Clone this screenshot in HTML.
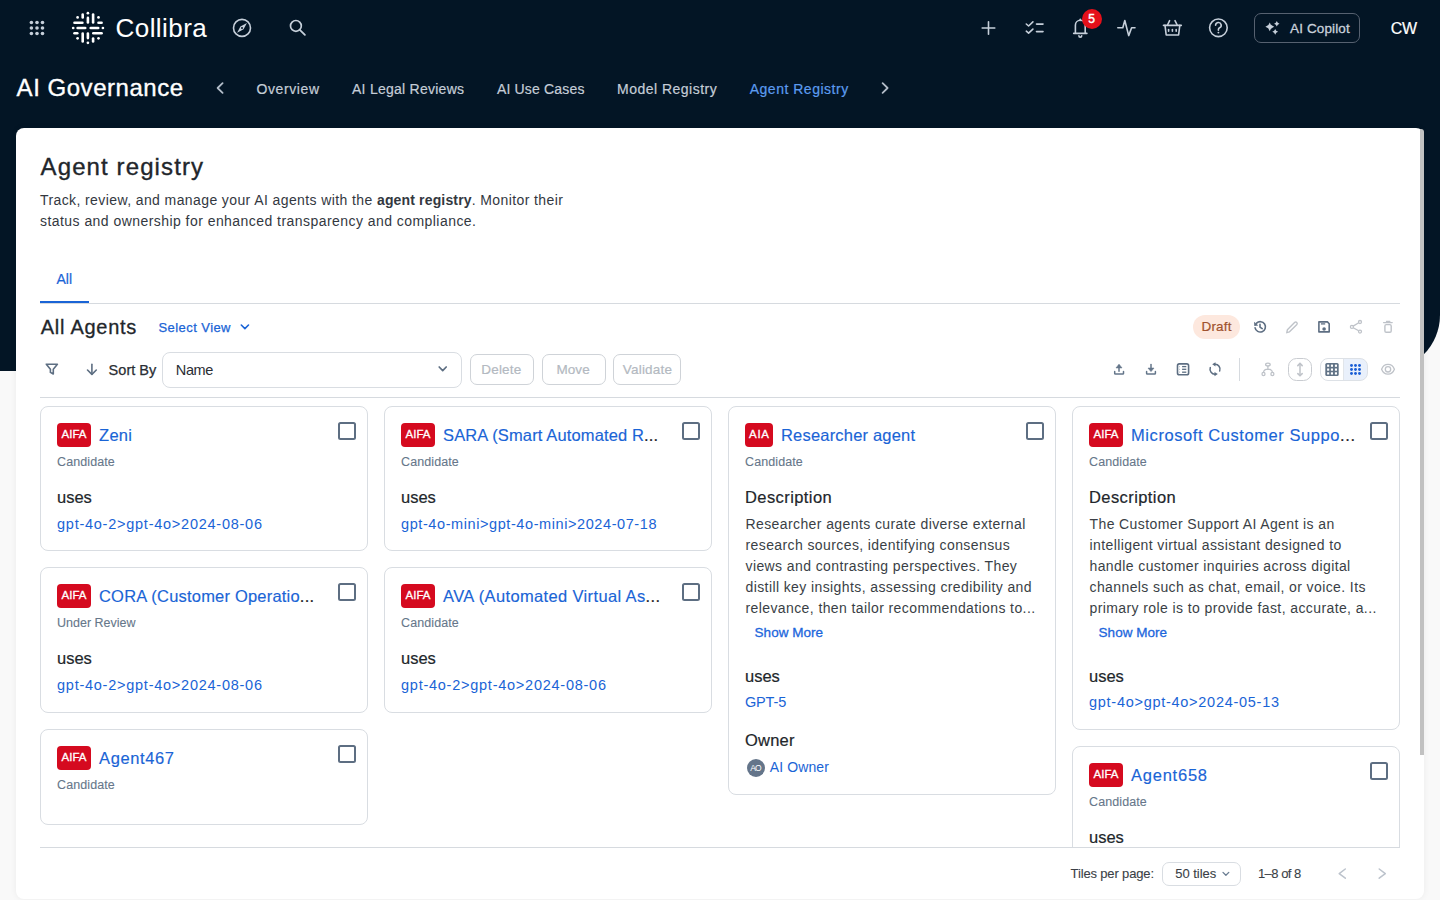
<!DOCTYPE html>
<html><head><meta charset="utf-8"><style>
html,body{margin:0;padding:0;}
body{width:1440px;height:900px;overflow:hidden;position:relative;background:#f9f9f9;font-family:"Liberation Sans",sans-serif;}
.t{position:absolute;white-space:nowrap;}
.b{position:absolute;display:block;}
</style></head><body>
<div class="b" style="left:0px;top:0px;width:1440px;height:371px;background:#031525;border-bottom-right-radius:56px;"></div>
<svg class="b" style="left:20px;top:10px" width="40" height="36" viewBox="20 10 40 36"><circle cx="31.4" cy="22.5" r="1.8" fill="#c6cfda"/><circle cx="31.4" cy="28" r="1.8" fill="#c6cfda"/><circle cx="31.4" cy="33.5" r="1.8" fill="#c6cfda"/><circle cx="37" cy="22.5" r="1.8" fill="#c6cfda"/><circle cx="37" cy="28" r="1.8" fill="#c6cfda"/><circle cx="37" cy="33.5" r="1.8" fill="#c6cfda"/><circle cx="42.5" cy="22.5" r="1.8" fill="#c6cfda"/><circle cx="42.5" cy="28" r="1.8" fill="#c6cfda"/><circle cx="42.5" cy="33.5" r="1.8" fill="#c6cfda"/></svg>
<svg class="b" style="left:68px;top:8px" width="40" height="40" viewBox="68 8 40 40"><g stroke="#ffffff" stroke-width="2.6" stroke-linecap="round" fill="none"><line x1="82.7" y1="14.5" x2="82.7" y2="17.4"/><line x1="87.9" y1="17.900000000000002" x2="87.9" y2="22.5"/><line x1="93.1" y1="14.5" x2="93.1" y2="22.5"/><line x1="74.5" y1="22.7" x2="82.4" y2="22.7"/><line x1="98.5" y1="22.7" x2="101.60000000000001" y2="22.7"/><line x1="77.6" y1="28" x2="85.2" y2="28"/><line x1="90.7" y1="28" x2="98.2" y2="28"/><line x1="74.5" y1="33.3" x2="77.3" y2="33.3"/><line x1="93.3" y1="33.3" x2="101.60000000000001" y2="33.3"/><line x1="82.7" y1="33.5" x2="82.7" y2="41.5"/><line x1="87.9" y1="33.5" x2="87.9" y2="38.1"/><line x1="93.1" y1="38.599999999999994" x2="93.1" y2="41.5"/></g><circle cx="87.9" cy="13.2" r="1.35" fill="#ffffff"/><circle cx="77.6" cy="17.4" r="1.35" fill="#ffffff"/><circle cx="98.5" cy="17.4" r="1.35" fill="#ffffff"/><circle cx="73.2" cy="28" r="1.35" fill="#ffffff"/><circle cx="102.9" cy="28" r="1.35" fill="#ffffff"/><circle cx="77.6" cy="38.3" r="1.35" fill="#ffffff"/><circle cx="98.5" cy="38.3" r="1.35" fill="#ffffff"/><circle cx="87.9" cy="42.8" r="1.35" fill="#ffffff"/></svg>
<div class="t " style="left:115.50px;top:14.99px;font-size:26px;line-height:26px;color:#ffffff;-webkit-text-stroke:0.05px #ffffff;letter-spacing:0.451px;">Collibra</div>
<svg class="b" style="left:230px;top:16px" width="24" height="24" viewBox="230 16 24 24"><circle cx="242" cy="27.9" r="8.5" fill="none" stroke="#c6cfda" stroke-width="1.6"/><path d="M246.9 23.1 L243.6 29.3 L237.1 32.7 L240.4 26.5 Z" fill="#c6cfda"/><circle cx="242" cy="27.9" r="1" fill="#031525"/></svg>
<svg class="b" style="left:286px;top:16px" width="24" height="24" viewBox="286 16 24 24"><circle cx="295.9" cy="25.9" r="5.4" fill="none" stroke="#c6cfda" stroke-width="1.7"/><line x1="299.8" y1="29.8" x2="304.9" y2="34.9" stroke="#c6cfda" stroke-width="1.8" stroke-linecap="round"/></svg>
<svg class="b" style="left:976px;top:16px" width="24" height="24" viewBox="976 16 24 24"><g stroke="#c6cfda" stroke-width="1.6" stroke-linecap="round"><line x1="982.2" y1="28" x2="994.8" y2="28"/><line x1="988.5" y1="21.7" x2="988.5" y2="34.3"/></g></svg>
<svg class="b" style="left:1022px;top:16px" width="26" height="24" viewBox="1022 16 26 24"><g stroke="#c6cfda" stroke-width="1.6" stroke-linecap="round" stroke-linejoin="round" fill="none"><path d="M1026.3 24 L1028.6 26 L1032.9 21.9"/><path d="M1026.3 31.2 L1028.6 33.2 L1032.9 29.1"/><line x1="1036.5" y1="24.1" x2="1043" y2="24.1"/><line x1="1036.5" y1="31.6" x2="1043" y2="31.6"/></g></svg>
<svg class="b" style="left:1068px;top:14px" width="26" height="26" viewBox="1068 14 26 26"><g stroke="#c6cfda" stroke-width="1.6" stroke-linecap="round" stroke-linejoin="round" fill="none"><path d="M1075.4 32.8 L1075.4 25.2 A4.9 4.9 0 0 1 1085.2 25.2 L1085.2 32.8"/><path d="M1073.7 33.4 L1086.9 33.4"/><line x1="1080.3" y1="19.3" x2="1080.3" y2="20.4"/><path d="M1078.9 35.7 A1.4 1.4 0 0 0 1081.7 35.7"/></g></svg>
<div class="b" style="left:1081.7px;top:8.6px;width:20.2px;height:20.2px;background:#e5101a;border-radius:50%;"></div>
<div class="t " style="left:1088.30px;top:12.94px;font-size:12px;line-height:12px;color:#ffffff;-webkit-text-stroke:0.45px #ffffff;">5</div>
<svg class="b" style="left:1114px;top:16px" width="24" height="24" viewBox="1114 16 24 24"><path d="M1117.8 27.8 L1122.8 27.8 L1124.8 20.5 L1128.7 35.6 L1131.6 27.8 L1135 27.8" stroke="#c6cfda" stroke-width="1.6" fill="none" stroke-linecap="round" stroke-linejoin="round"/></svg>
<svg class="b" style="left:1160px;top:16px" width="24" height="24" viewBox="1160 16 24 24"><g stroke="#c6cfda" stroke-width="1.6" fill="none" stroke-linecap="round" stroke-linejoin="round"><path d="M1163.5 25.4 L1181.3 25.4"/><path d="M1165 25.4 L1166.2 35 L1178.6 35 L1179.8 25.4"/><path d="M1169.6 20.6 L1167.5 25"/><path d="M1175 20.6 L1177.2 25"/><line x1="1168.6" y1="29.6" x2="1168.6" y2="31.2"/><line x1="1172.4" y1="29.6" x2="1172.4" y2="31.2"/><line x1="1176.2" y1="29.6" x2="1176.2" y2="31.2"/></g></svg>
<svg class="b" style="left:1206px;top:16px" width="26" height="26" viewBox="1206 16 26 26"><circle cx="1218.4" cy="27.8" r="8.8" fill="none" stroke="#c6cfda" stroke-width="1.6"/><path d="M1215.6 25.3 A2.8 2.8 0 1 1 1219.6 27.8 C1218.8 28.2 1218.4 28.7 1218.4 29.6 L1218.4 30.2" stroke="#c6cfda" stroke-width="1.6" fill="none" stroke-linecap="round"/><circle cx="1218.4" cy="32.6" r="0.95" fill="#c6cfda"/></svg>
<div class="b" style="left:1253.5px;top:13px;width:106px;height:29.5px;box-sizing:border-box;border:1px solid #566170;border-radius:7px;"></div>
<svg class="b" style="left:1262px;top:18px" width="20" height="20" viewBox="1262 18 20 20"><path fill="#c6cfda" d="M1269.8 22.40 Q1270.77 25.83 1274.20 26.8 Q1270.77 27.77 1269.8 31.20 Q1268.83 27.77 1265.40 26.8 Q1268.83 25.83 1269.8 22.40ZM1276.8 21.10 Q1277.39 23.21 1279.50 23.8 Q1277.39 24.39 1276.8 26.50 Q1276.21 24.39 1274.10 23.8 Q1276.21 23.21 1276.8 21.10ZM1275.2 28.90 Q1275.84 31.16 1278.10 31.8 Q1275.84 32.44 1275.2 34.70 Q1274.56 32.44 1272.30 31.8 Q1274.56 31.16 1275.2 28.90Z"/></svg>
<div class="t " style="left:1290.00px;top:21.77px;font-size:13.5px;line-height:13.5px;color:#c9d1db;-webkit-text-stroke:0.3px #c9d1db;letter-spacing:0.130px;">AI Copilot</div>
<div class="t " style="left:1390.70px;top:20.96px;font-size:16px;line-height:16px;color:#ffffff;-webkit-text-stroke:0.2px #ffffff;letter-spacing:-0.256px;">CW</div>
<div class="t " style="left:16.60px;top:76.08px;font-size:24px;line-height:24px;color:#ffffff;-webkit-text-stroke:0.35px #ffffff;letter-spacing:0.534px;">AI Governance</div>
<svg class="b" style="left:210px;top:78px" width="20" height="20" viewBox="210 78 20 20"><path d="M222.6 83.2 L217.6 88 L222.6 92.8" stroke="#b3bdc9" stroke-width="1.8" fill="none" stroke-linecap="round" stroke-linejoin="round"/></svg>
<div class="t " style="left:256.40px;top:81.85px;font-size:14px;line-height:14px;color:#c5cdd7;-webkit-text-stroke:0.2px #c5cdd7;letter-spacing:0.608px;">Overview</div>
<div class="t " style="left:352.00px;top:81.85px;font-size:14px;line-height:14px;color:#c5cdd7;-webkit-text-stroke:0.2px #c5cdd7;letter-spacing:0.256px;">AI Legal Reviews</div>
<div class="t " style="left:496.90px;top:81.85px;font-size:14px;line-height:14px;color:#c5cdd7;-webkit-text-stroke:0.2px #c5cdd7;letter-spacing:0.174px;">AI Use Cases</div>
<div class="t " style="left:617.00px;top:81.85px;font-size:14px;line-height:14px;color:#c5cdd7;-webkit-text-stroke:0.2px #c5cdd7;letter-spacing:0.487px;">Model Registry</div>
<div class="t " style="left:749.70px;top:81.85px;font-size:14px;line-height:14px;color:#5c9cf0;-webkit-text-stroke:0.2px #5c9cf0;letter-spacing:0.514px;">Agent Registry</div>
<svg class="b" style="left:875px;top:78px" width="20" height="20" viewBox="875 78 20 20"><path d="M882.6 83.2 L887.6 88 L882.6 92.8" stroke="#b3bdc9" stroke-width="1.8" fill="none" stroke-linecap="round" stroke-linejoin="round"/></svg>
<div class="b" style="left:16px;top:128px;width:1408px;height:771px;background:#ffffff;border-radius:8px;box-shadow:0 0 7px rgba(0,0,0,0.06);"></div>
<div class="b" style="left:1420px;top:129px;width:4px;height:626px;background:#c1c1c1;border-top-right-radius:3px;"></div>
<div class="t " style="left:40.60px;top:154.68px;font-size:24px;line-height:24px;color:#22262b;-webkit-text-stroke:0.35px #22262b;letter-spacing:1.103px;">Agent registry</div>
<div class="t" style="left:40px;top:192.95px;font-size:14px;line-height:14px;color:#33383f;letter-spacing:0.40px;">Track, review, and manage your AI agents with the <b style="font-weight:700;letter-spacing:0.15px">agent registry</b>. Monitor their</div>
<div class="t " style="left:40.00px;top:213.75px;font-size:14px;line-height:14px;color:#33383f;letter-spacing:0.449px;">status and ownership for enhanced transparency and compliance.</div>
<div class="t " style="left:56.40px;top:272.15px;font-size:14px;line-height:14px;color:#1a64d6;-webkit-text-stroke:0.2px #1a64d6;letter-spacing:0.121px;">All</div>
<div class="b" style="left:40px;top:303px;width:1360px;height:1px;background:#d6dadf;"></div>
<div class="b" style="left:40px;top:301px;width:49px;height:2px;background:#1a64d6;"></div>
<div class="t " style="left:40.80px;top:316.87px;font-size:20px;line-height:20px;color:#22262b;-webkit-text-stroke:0.3px #22262b;letter-spacing:0.728px;">All Agents</div>
<div class="t " style="left:158.50px;top:320.50px;font-size:13px;line-height:13px;color:#1a64d6;-webkit-text-stroke:0.25px #1a64d6;letter-spacing:0.432px;">Select View</div>
<svg class="b" style="left:238px;top:320px" width="14" height="14" viewBox="238 320 14 14"><path d="M241.3 325 L244.9 328.6 L248.5 325" stroke="#1a64d6" stroke-width="1.6" fill="none" stroke-linecap="round" stroke-linejoin="round"/></svg>
<div class="b" style="left:1193px;top:315px;width:47px;height:24px;background:#fde8de;border-radius:12px;"></div>
<div class="t " style="left:1201.60px;top:319.97px;font-size:13.5px;line-height:13.5px;color:#a0522d;-webkit-text-stroke:0.2px #a0522d;letter-spacing:0.137px;">Draft</div>
<svg class="b" style="left:1250px;top:317px" width="20" height="20" viewBox="1250 317 20 20"><g stroke="#5d6e82" stroke-width="1.6" fill="none" stroke-linecap="round" stroke-linejoin="round"><path d="M1255.1 327.8 A5.2 5.2 0 1 0 1256.6 323.1"/><path d="M1260 324.4 L1260 327.1 L1262.2 328.6"/></g><path d="M1254.1 321.8 L1254.3 325.9 L1258.3 325.5 Z" fill="#5d6e82"/></svg>
<svg class="b" style="left:1282px;top:317px" width="20" height="20" viewBox="1282 317 20 20"><path d="M1286.8 332.7 L1287.4 329.7 L1294.8 322.3 A1.5 1.5 0 0 1 1296.9 324.4 L1289.5 331.8 Z" stroke="#bfc3c9" stroke-width="1.4" fill="none" stroke-linejoin="round"/></svg>
<svg class="b" style="left:1314px;top:317px" width="20" height="20" viewBox="1314 317 20 20"><g stroke="#5d6e82" stroke-width="1.6" fill="none" stroke-linejoin="round"><path d="M1318.9 321.9 L1327.4 321.9 L1329.2 323.7 L1329.2 331.9 L1318.9 331.9 Z"/><path d="M1320.9 323.9 L1325.2 323.9" stroke-width="1.3"/></g><circle cx="1324.1" cy="329" r="1.8" fill="#5d6e82"/></svg>
<svg class="b" style="left:1346px;top:317px" width="20" height="20" viewBox="1346 317 20 20"><g stroke="#bfc3c9" stroke-width="1.3" fill="none"><circle cx="1360" cy="322" r="1.5"/><circle cx="1351.9" cy="326.9" r="1.5"/><circle cx="1360" cy="331.6" r="1.5"/><line x1="1353.2" y1="326.1" x2="1358.7" y2="322.8"/><line x1="1353.2" y1="327.7" x2="1358.7" y2="330.8"/></g></svg>
<svg class="b" style="left:1378px;top:317px" width="20" height="20" viewBox="1378 317 20 20"><g stroke="#bfc3c9" stroke-width="1.4" fill="none" stroke-linejoin="round" stroke-linecap="round"><line x1="1383.6" y1="322.6" x2="1392.2" y2="322.6"/><line x1="1386.4" y1="321.4" x2="1389.9" y2="321.4" stroke-width="1.1"/><rect x="1384.9" y="324.6" width="6.3" height="7.6" rx="1.3"/></g></svg>
<svg class="b" style="left:42px;top:360px" width="20" height="20" viewBox="42 360 20 20"><path d="M46.3 364.2 L57.4 364.2 L53.3 369.2 L53.3 374 L50.4 372.4 L50.4 369.2 Z" stroke="#5d6e82" stroke-width="1.6" fill="none" stroke-linejoin="round"/></svg>
<svg class="b" style="left:82px;top:360px" width="20" height="20" viewBox="82 360 20 20"><g stroke="#5d6e82" stroke-width="1.6" fill="none" stroke-linecap="round" stroke-linejoin="round"><line x1="91.9" y1="364.3" x2="91.9" y2="374.3"/><path d="M87.5 370 L91.9 374.4 L96.3 370"/></g></svg>
<div class="t " style="left:108.60px;top:362.63px;font-size:14.5px;line-height:14.5px;color:#2a2e34;-webkit-text-stroke:0.25px #2a2e34;letter-spacing:0.026px;">Sort By</div>
<div class="b" style="left:162px;top:351.5px;width:299.5px;height:36px;box-sizing:border-box;border:1.5px solid #d9dde2;border-radius:8px;"></div>
<div class="t " style="left:175.80px;top:362.63px;font-size:14.5px;line-height:14.5px;color:#2a2e34;letter-spacing:-0.359px;">Name</div>
<svg class="b" style="left:434px;top:362px" width="16" height="16" viewBox="434 362 16 16"><path d="M439.2 367 L442.7 370.6 L446.2 367" stroke="#5d6e82" stroke-width="1.7" fill="none" stroke-linecap="round" stroke-linejoin="round"/></svg>
<div class="b" style="left:470px;top:354.4px;width:64px;height:30.4px;box-sizing:border-box;border:1.5px solid #cfd3d8;border-radius:7px;"></div>
<div class="t " style="left:481.30px;top:362.87px;font-size:13.5px;line-height:13.5px;color:#b3b9c1;-webkit-text-stroke:0.2px #b3b9c1;letter-spacing:0.175px;">Delete</div>
<div class="b" style="left:542px;top:354.4px;width:64px;height:30.4px;box-sizing:border-box;border:1.5px solid #cfd3d8;border-radius:7px;"></div>
<div class="t " style="left:556.40px;top:362.87px;font-size:13.5px;line-height:13.5px;color:#b3b9c1;-webkit-text-stroke:0.2px #b3b9c1;letter-spacing:0.096px;">Move</div>
<div class="b" style="left:613px;top:354.4px;width:68px;height:30.4px;box-sizing:border-box;border:1.5px solid #cfd3d8;border-radius:7px;"></div>
<div class="t " style="left:622.80px;top:362.87px;font-size:13.5px;line-height:13.5px;color:#b3b9c1;-webkit-text-stroke:0.2px #b3b9c1;letter-spacing:0.202px;">Validate</div>
<svg class="b" style="left:1109px;top:360px" width="20" height="20" viewBox="1109 360 20 20"><g stroke="#64768a" stroke-width="1.5" fill="none" stroke-linecap="round" stroke-linejoin="round"><path d="M1114.7 371.6 L1114.7 373.4 Q1114.7 374.1 1115.4 374.1 L1122.8 374.1 Q1123.5 374.1 1123.5 373.4 L1123.5 371.6"/><line x1="1119" y1="365.6" x2="1119" y2="371.3"/></g><path d="M1116 367.9 L1119 364.2 L1122 367.9 Z" fill="#64768a" stroke="#64768a" stroke-width="0.6" stroke-linejoin="round"/></svg>
<svg class="b" style="left:1141px;top:360px" width="20" height="20" viewBox="1141 360 20 20"><g stroke="#64768a" stroke-width="1.5" fill="none" stroke-linecap="round" stroke-linejoin="round"><path d="M1146.6 371.6 L1146.6 373.4 Q1146.6 374.1 1147.3 374.1 L1154.7 374.1 Q1155.4 374.1 1155.4 373.4 L1155.4 371.6"/><line x1="1151" y1="364.6" x2="1151" y2="369.5"/></g><path d="M1148 368.1 L1151 371.6 L1154 368.1 Z" fill="#64768a" stroke="#64768a" stroke-width="0.6" stroke-linejoin="round"/></svg>
<svg class="b" style="left:1172px;top:359px" width="22" height="22" viewBox="1172 359 22 22"><g stroke="#5d6e82" fill="none"><rect x="1177.5" y="363.9" width="11.1" height="10.9" rx="1.8" stroke-width="1.6"/><g stroke-width="1.3"><line x1="1179.3" y1="366.6" x2="1179.9" y2="366.6" stroke-opacity="0.6"/><line x1="1182.1" y1="366.6" x2="1186.3" y2="366.6"/><line x1="1179.3" y1="369.3" x2="1179.9" y2="369.3" stroke-opacity="0.6"/><line x1="1182.1" y1="369.3" x2="1186.3" y2="369.3"/><line x1="1179.3" y1="372.2" x2="1179.9" y2="372.2" stroke-opacity="0.6"/><line x1="1182.1" y1="372.2" x2="1186.3" y2="372.2"/></g></g></svg>
<svg class="b" style="left:1204px;top:359px" width="22" height="22" viewBox="1204 359 22 22"><g stroke="#5d6e82" stroke-width="1.5" fill="none" stroke-linecap="round"><path d="M1210.3 367.6 A4.9 4.9 0 0 0 1215.4 374.1"/><path d="M1219.7 371 A4.9 4.9 0 0 0 1214.6 364.3"/></g><path d="M1214.5 372 L1217.8 374.1 L1214.5 376.2 Z" fill="#5d6e82"/><path d="M1215.5 362.2 L1212.2 364.3 L1215.5 366.4 Z" fill="#5d6e82"/></svg>
<div class="b" style="left:1239px;top:358px;width:1px;height:23px;background:#d6dadf;"></div>
<svg class="b" style="left:1258px;top:359px" width="20" height="20" viewBox="1258 359 20 20"><g stroke="#bfc3c9" stroke-width="1.3" fill="none"><ellipse cx="1267.9" cy="364.6" rx="2.3" ry="1.4"/><ellipse cx="1263.5" cy="374" rx="1.5" ry="1.7"/><ellipse cx="1272.4" cy="374" rx="1.5" ry="1.7"/><path d="M1267.9 366 L1267.9 369.1 M1263.5 372.3 Q1263.8 369.2 1267.9 369.1 Q1272.1 369.2 1272.4 372.3"/></g></svg>
<div class="b" style="left:1288.3px;top:357.5px;width:23.3px;height:23.5px;box-sizing:border-box;border:1.5px solid #c9ccd1;border-radius:8.5px;"></div>
<svg class="b" style="left:1290px;top:359px" width="20" height="20" viewBox="1290 359 20 20"><g stroke="#bfc3c9" stroke-width="1.5" fill="none" stroke-linecap="round" stroke-linejoin="round"><line x1="1300" y1="363.6" x2="1300" y2="375.6"/><path d="M1297.8 365.6 L1300 363.4 L1302.2 365.6"/><path d="M1297.8 373.6 L1300 375.8 L1302.2 373.6"/></g></svg>
<div class="b" style="left:1320.2px;top:357.6px;width:47.4px;height:23.6px;box-sizing:border-box;border:1.5px solid #dde1e6;border-radius:8px;overflow:hidden;background:linear-gradient(90deg,#fff 0,#fff 21.7px,#e1e5ea 21.7px,#e1e5ea 22.7px,#e9f0fb 22.7px);"></div>
<svg class="b" style="left:1322px;top:359px" width="20" height="20" viewBox="1322 359 20 20"><rect x="1325.3" y="362.9" width="13.4" height="13.1" rx="1.6" fill="#617386"/><rect x="1327.1" y="364.6" width="2.1" height="2.2" fill="#ffffff"/><rect x="1327.1" y="368.5" width="2.1" height="2.2" fill="#ffffff"/><rect x="1327.1" y="372.3" width="2.1" height="2.2" fill="#ffffff"/><rect x="1330.9" y="364.6" width="2.1" height="2.2" fill="#ffffff"/><rect x="1330.9" y="368.5" width="2.1" height="2.2" fill="#ffffff"/><rect x="1330.9" y="372.3" width="2.1" height="2.2" fill="#ffffff"/><rect x="1334.9" y="364.6" width="2.1" height="2.2" fill="#ffffff"/><rect x="1334.9" y="368.5" width="2.1" height="2.2" fill="#ffffff"/><rect x="1334.9" y="372.3" width="2.1" height="2.2" fill="#ffffff"/></svg>
<svg class="b" style="left:1346px;top:359px" width="20" height="20" viewBox="1346 359 20 20"><circle cx="1351.5" cy="365.5" r="1.45" fill="#1a5ed6"/><circle cx="1351.5" cy="369.5" r="1.45" fill="#1a5ed6"/><circle cx="1351.5" cy="373.5" r="1.45" fill="#1a5ed6"/><circle cx="1355.5" cy="365.5" r="1.45" fill="#1a5ed6"/><circle cx="1355.5" cy="369.5" r="1.45" fill="#1a5ed6"/><circle cx="1355.5" cy="373.5" r="1.45" fill="#1a5ed6"/><circle cx="1359.5" cy="365.5" r="1.45" fill="#1a5ed6"/><circle cx="1359.5" cy="369.5" r="1.45" fill="#1a5ed6"/><circle cx="1359.5" cy="373.5" r="1.45" fill="#1a5ed6"/></svg>
<svg class="b" style="left:1378px;top:359px" width="20" height="20" viewBox="1378 359 20 20"><g stroke="#bfc3c9" stroke-width="1.3" fill="none"><path d="M1381.6 369.3 C1384 362.8 1392 362.8 1394.4 369.3 C1392 375.8 1384 375.8 1381.6 369.3Z"/><circle cx="1388" cy="369.3" r="2.7"/></g></svg>
<div class="b" style="left:40px;top:397px;width:1360px;height:1px;background:#d6dadf;"></div>
<div class="b" style="left:0;top:398px;width:1440px;height:449px;overflow:hidden;">
<div class="b" style="left:0;top:-398px;width:1440px;height:1200px;">
<div class="b" style="left:40px;top:406px;width:328px;height:145px;box-sizing:border-box;border:1px solid #d9dde2;border-radius:8px;background:#fff;"></div>
<div class="b" style="left:57px;top:423px;width:34px;height:24px;background:#d50a1f;border-radius:4px;"></div>
<div class="t " style="left:61.50px;top:428.87px;font-size:11.5px;line-height:11.5px;color:#ffffff;-webkit-text-stroke:0.3px #ffffff;letter-spacing:0.024px;">AIFA</div>
<div class="t " style="left:99.00px;top:427.03px;font-size:16.5px;line-height:16.5px;color:#1a64d6;-webkit-text-stroke:0.15px #1a64d6;letter-spacing:0.301px;">Zeni</div>
<div class="b" style="left:338px;top:422px;width:18px;height:18px;box-sizing:border-box;border:2px solid #5d6e82;border-radius:2.5px;"></div>
<div class="t " style="left:57.00px;top:456.42px;font-size:12.5px;line-height:12.5px;color:#66778a;-webkit-text-stroke:0.1px #66778a;letter-spacing:0.102px;">Candidate</div>
<div class="t " style="left:57.00px;top:489.03px;font-size:16.5px;line-height:16.5px;color:#22262b;-webkit-text-stroke:0.2px #22262b;letter-spacing:-0.018px;">uses</div>
<div class="t " style="left:57.00px;top:516.83px;font-size:14.5px;line-height:14.5px;color:#1a64d6;letter-spacing:0.751px;">gpt-4o-2&gt;gpt-4o&gt;2024-08-06</div>
<div class="b" style="left:40px;top:567px;width:328px;height:146px;box-sizing:border-box;border:1px solid #d9dde2;border-radius:8px;background:#fff;"></div>
<div class="b" style="left:57px;top:584px;width:34px;height:24px;background:#d50a1f;border-radius:4px;"></div>
<div class="t " style="left:61.50px;top:589.87px;font-size:11.5px;line-height:11.5px;color:#ffffff;-webkit-text-stroke:0.3px #ffffff;letter-spacing:0.024px;">AIFA</div>
<div class="t " style="left:99.00px;top:588.03px;font-size:16.5px;line-height:16.5px;color:#1a64d6;-webkit-text-stroke:0.15px #1a64d6;letter-spacing:0.201px;">CORA (Customer Operatio<span style="color:#1d2126;-webkit-text-stroke:0.2px #1d2126">...</span></div>
<div class="b" style="left:338px;top:583px;width:18px;height:18px;box-sizing:border-box;border:2px solid #5d6e82;border-radius:2.5px;"></div>
<div class="t " style="left:57.00px;top:617.42px;font-size:12.5px;line-height:12.5px;color:#66778a;-webkit-text-stroke:0.1px #66778a;">Under Review</div>
<div class="t " style="left:57.00px;top:650.03px;font-size:16.5px;line-height:16.5px;color:#22262b;-webkit-text-stroke:0.2px #22262b;letter-spacing:-0.018px;">uses</div>
<div class="t " style="left:57.00px;top:677.83px;font-size:14.5px;line-height:14.5px;color:#1a64d6;letter-spacing:0.751px;">gpt-4o-2&gt;gpt-4o&gt;2024-08-06</div>
<div class="b" style="left:40px;top:729px;width:328px;height:96px;box-sizing:border-box;border:1px solid #d9dde2;border-radius:8px;background:#fff;"></div>
<div class="b" style="left:57px;top:746px;width:34px;height:24px;background:#d50a1f;border-radius:4px;"></div>
<div class="t " style="left:61.50px;top:751.87px;font-size:11.5px;line-height:11.5px;color:#ffffff;-webkit-text-stroke:0.3px #ffffff;letter-spacing:0.024px;">AIFA</div>
<div class="t " style="left:99.00px;top:750.03px;font-size:16.5px;line-height:16.5px;color:#1a64d6;-webkit-text-stroke:0.15px #1a64d6;letter-spacing:0.622px;">Agent467</div>
<div class="b" style="left:338px;top:745px;width:18px;height:18px;box-sizing:border-box;border:2px solid #5d6e82;border-radius:2.5px;"></div>
<div class="t " style="left:57.00px;top:779.42px;font-size:12.5px;line-height:12.5px;color:#66778a;-webkit-text-stroke:0.1px #66778a;letter-spacing:0.102px;">Candidate</div>
<div class="b" style="left:384px;top:406px;width:328px;height:145px;box-sizing:border-box;border:1px solid #d9dde2;border-radius:8px;background:#fff;"></div>
<div class="b" style="left:401px;top:423px;width:34px;height:24px;background:#d50a1f;border-radius:4px;"></div>
<div class="t " style="left:405.50px;top:428.87px;font-size:11.5px;line-height:11.5px;color:#ffffff;-webkit-text-stroke:0.3px #ffffff;letter-spacing:0.024px;">AIFA</div>
<div class="t " style="left:443.00px;top:427.03px;font-size:16.5px;line-height:16.5px;color:#1a64d6;-webkit-text-stroke:0.15px #1a64d6;letter-spacing:0.127px;">SARA (Smart Automated R<span style="color:#1d2126;-webkit-text-stroke:0.2px #1d2126">...</span></div>
<div class="b" style="left:682px;top:422px;width:18px;height:18px;box-sizing:border-box;border:2px solid #5d6e82;border-radius:2.5px;"></div>
<div class="t " style="left:401.00px;top:456.42px;font-size:12.5px;line-height:12.5px;color:#66778a;-webkit-text-stroke:0.1px #66778a;letter-spacing:0.102px;">Candidate</div>
<div class="t " style="left:401.00px;top:489.03px;font-size:16.5px;line-height:16.5px;color:#22262b;-webkit-text-stroke:0.2px #22262b;letter-spacing:-0.018px;">uses</div>
<div class="t " style="left:401.00px;top:516.83px;font-size:14.5px;line-height:14.5px;color:#1a64d6;letter-spacing:0.586px;">gpt-4o-mini&gt;gpt-4o-mini&gt;2024-07-18</div>
<div class="b" style="left:384px;top:567px;width:328px;height:146px;box-sizing:border-box;border:1px solid #d9dde2;border-radius:8px;background:#fff;"></div>
<div class="b" style="left:401px;top:584px;width:34px;height:24px;background:#d50a1f;border-radius:4px;"></div>
<div class="t " style="left:405.50px;top:589.87px;font-size:11.5px;line-height:11.5px;color:#ffffff;-webkit-text-stroke:0.3px #ffffff;letter-spacing:0.024px;">AIFA</div>
<div class="t " style="left:443.00px;top:588.03px;font-size:16.5px;line-height:16.5px;color:#1a64d6;-webkit-text-stroke:0.15px #1a64d6;letter-spacing:0.360px;">AVA (Automated Virtual As<span style="color:#1d2126;-webkit-text-stroke:0.2px #1d2126">...</span></div>
<div class="b" style="left:682px;top:583px;width:18px;height:18px;box-sizing:border-box;border:2px solid #5d6e82;border-radius:2.5px;"></div>
<div class="t " style="left:401.00px;top:617.42px;font-size:12.5px;line-height:12.5px;color:#66778a;-webkit-text-stroke:0.1px #66778a;letter-spacing:0.102px;">Candidate</div>
<div class="t " style="left:401.00px;top:650.03px;font-size:16.5px;line-height:16.5px;color:#22262b;-webkit-text-stroke:0.2px #22262b;letter-spacing:-0.018px;">uses</div>
<div class="t " style="left:401.00px;top:677.83px;font-size:14.5px;line-height:14.5px;color:#1a64d6;letter-spacing:0.751px;">gpt-4o-2&gt;gpt-4o&gt;2024-08-06</div>
<div class="b" style="left:728px;top:406px;width:328px;height:389px;box-sizing:border-box;border:1px solid #d9dde2;border-radius:8px;background:#fff;"></div>
<div class="b" style="left:745px;top:423px;width:28px;height:24px;background:#d50a1f;border-radius:4px;"></div>
<div class="t " style="left:749.00px;top:428.87px;font-size:11.5px;line-height:11.5px;color:#ffffff;-webkit-text-stroke:0.3px #ffffff;letter-spacing:0.732px;">AIA</div>
<div class="t " style="left:781.00px;top:427.03px;font-size:16.5px;line-height:16.5px;color:#1a64d6;-webkit-text-stroke:0.15px #1a64d6;letter-spacing:0.189px;">Researcher agent</div>
<div class="b" style="left:1026px;top:422px;width:18px;height:18px;box-sizing:border-box;border:2px solid #5d6e82;border-radius:2.5px;"></div>
<div class="t " style="left:745.00px;top:456.42px;font-size:12.5px;line-height:12.5px;color:#66778a;-webkit-text-stroke:0.1px #66778a;letter-spacing:0.102px;">Candidate</div>
<div class="t " style="left:745.00px;top:489.03px;font-size:16.5px;line-height:16.5px;color:#22262b;-webkit-text-stroke:0.2px #22262b;letter-spacing:0.417px;">Description</div>
<div class="t " style="left:745.50px;top:517.15px;font-size:14px;line-height:14px;color:#3a3f46;letter-spacing:0.4px;">Researcher agents curate diverse external</div>
<div class="t " style="left:745.50px;top:538.15px;font-size:14px;line-height:14px;color:#3a3f46;letter-spacing:0.4px;">research sources, identifying consensus</div>
<div class="t " style="left:745.50px;top:559.15px;font-size:14px;line-height:14px;color:#3a3f46;letter-spacing:0.4px;">views and contrasting perspectives. They</div>
<div class="t " style="left:745.50px;top:580.15px;font-size:14px;line-height:14px;color:#3a3f46;letter-spacing:0.4px;">distill key insights, assessing credibility and</div>
<div class="t " style="left:745.50px;top:601.15px;font-size:14px;line-height:14px;color:#3a3f46;letter-spacing:0.4px;">relevance, then tailor recommendations to...</div>
<div class="t " style="left:754.60px;top:626.37px;font-size:13.5px;line-height:13.5px;color:#1c66dc;-webkit-text-stroke:0.3px #1c66dc;letter-spacing:0.015px;">Show More</div>
<div class="t " style="left:745.00px;top:667.53px;font-size:16.5px;line-height:16.5px;color:#22262b;-webkit-text-stroke:0.2px #22262b;letter-spacing:-0.018px;">uses</div>
<div class="t " style="left:745.00px;top:695.33px;font-size:14.5px;line-height:14.5px;color:#1a64d6;letter-spacing:-0.175px;">GPT-5</div>
<div class="t " style="left:745.00px;top:732.33px;font-size:16.5px;line-height:16.5px;color:#22262b;-webkit-text-stroke:0.2px #22262b;letter-spacing:0.226px;">Owner</div>
<div class="b" style="left:747px;top:758.5px;width:18px;height:18px;background:#64758a;border-radius:50%;"></div>
<div class="t " style="left:750.30px;top:763.70px;font-size:8.5px;line-height:8.5px;color:#ffffff;letter-spacing:-0.981px;">AO</div>
<div class="t " style="left:769.80px;top:760.45px;font-size:14px;line-height:14px;color:#1a64d6;letter-spacing:0.107px;">AI Owner</div>
<div class="b" style="left:1072px;top:406px;width:328px;height:324px;box-sizing:border-box;border:1px solid #d9dde2;border-radius:8px;background:#fff;"></div>
<div class="b" style="left:1089px;top:423px;width:34px;height:24px;background:#d50a1f;border-radius:4px;"></div>
<div class="t " style="left:1093.50px;top:428.87px;font-size:11.5px;line-height:11.5px;color:#ffffff;-webkit-text-stroke:0.3px #ffffff;letter-spacing:0.024px;">AIFA</div>
<div class="t " style="left:1131.00px;top:427.03px;font-size:16.5px;line-height:16.5px;color:#1a64d6;-webkit-text-stroke:0.15px #1a64d6;letter-spacing:0.574px;">Microsoft Customer Suppo<span style="color:#1d2126;-webkit-text-stroke:0.2px #1d2126">...</span></div>
<div class="b" style="left:1370px;top:422px;width:18px;height:18px;box-sizing:border-box;border:2px solid #5d6e82;border-radius:2.5px;"></div>
<div class="t " style="left:1089.00px;top:456.42px;font-size:12.5px;line-height:12.5px;color:#66778a;-webkit-text-stroke:0.1px #66778a;letter-spacing:0.102px;">Candidate</div>
<div class="t " style="left:1089.00px;top:489.03px;font-size:16.5px;line-height:16.5px;color:#22262b;-webkit-text-stroke:0.2px #22262b;letter-spacing:0.417px;">Description</div>
<div class="t " style="left:1089.50px;top:517.15px;font-size:14px;line-height:14px;color:#3a3f46;letter-spacing:0.4px;">The Customer Support AI Agent is an</div>
<div class="t " style="left:1089.50px;top:538.15px;font-size:14px;line-height:14px;color:#3a3f46;letter-spacing:0.4px;">intelligent virtual assistant designed to</div>
<div class="t " style="left:1089.50px;top:559.15px;font-size:14px;line-height:14px;color:#3a3f46;letter-spacing:0.4px;">handle customer inquiries across digital</div>
<div class="t " style="left:1089.50px;top:580.15px;font-size:14px;line-height:14px;color:#3a3f46;letter-spacing:0.4px;">channels such as chat, email, or voice. Its</div>
<div class="t " style="left:1089.50px;top:601.15px;font-size:14px;line-height:14px;color:#3a3f46;letter-spacing:0.4px;">primary role is to provide fast, accurate, a...</div>
<div class="t " style="left:1098.60px;top:626.37px;font-size:13.5px;line-height:13.5px;color:#1c66dc;-webkit-text-stroke:0.3px #1c66dc;letter-spacing:0.015px;">Show More</div>
<div class="t " style="left:1089.00px;top:667.53px;font-size:16.5px;line-height:16.5px;color:#22262b;-webkit-text-stroke:0.2px #22262b;letter-spacing:-0.018px;">uses</div>
<div class="t " style="left:1089.00px;top:695.33px;font-size:14.5px;line-height:14.5px;color:#1a64d6;letter-spacing:0.725px;">gpt-4o&gt;gpt-4o&gt;2024-05-13</div>
<div class="b" style="left:1072px;top:746px;width:328px;height:200px;box-sizing:border-box;border:1px solid #d9dde2;border-radius:8px;background:#fff;"></div>
<div class="b" style="left:1089px;top:763px;width:34px;height:24px;background:#d50a1f;border-radius:4px;"></div>
<div class="t " style="left:1093.50px;top:768.87px;font-size:11.5px;line-height:11.5px;color:#ffffff;-webkit-text-stroke:0.3px #ffffff;letter-spacing:0.024px;">AIFA</div>
<div class="t " style="left:1131.00px;top:767.03px;font-size:16.5px;line-height:16.5px;color:#1a64d6;-webkit-text-stroke:0.15px #1a64d6;letter-spacing:0.764px;">Agent658</div>
<div class="b" style="left:1370px;top:762px;width:18px;height:18px;box-sizing:border-box;border:2px solid #5d6e82;border-radius:2.5px;"></div>
<div class="t " style="left:1089.00px;top:796.42px;font-size:12.5px;line-height:12.5px;color:#66778a;-webkit-text-stroke:0.1px #66778a;letter-spacing:0.102px;">Candidate</div>
<div class="t " style="left:1089.00px;top:829.03px;font-size:16.5px;line-height:16.5px;color:#22262b;-webkit-text-stroke:0.2px #22262b;letter-spacing:-0.018px;">uses</div>
<div class="t " style="left:1089.00px;top:856.83px;font-size:14.5px;line-height:14.5px;color:#1a64d6;"></div>
</div></div>
<div class="b" style="left:40px;top:847px;width:1360px;height:1px;background:#d6dadf;"></div>
<div class="t " style="left:1070.60px;top:867.10px;font-size:13px;line-height:13px;color:#3a3f46;-webkit-text-stroke:0.1px #3a3f46;letter-spacing:-0.151px;">Tiles per page:</div>
<div class="b" style="left:1162.2px;top:861.8px;width:79px;height:24.4px;box-sizing:border-box;border:1px solid #d9dde2;border-radius:7px;"></div>
<div class="t " style="left:1175.20px;top:867.00px;font-size:13px;line-height:13px;color:#3a3f46;-webkit-text-stroke:0.1px #3a3f46;letter-spacing:-0.013px;">50 tiles</div>
<svg class="b" style="left:1220px;top:867px" width="12" height="12" viewBox="1220 867 12 12"><path d="M1223 872.4 L1225.9 875.3 L1228.8 872.4" stroke="#6a7d92" stroke-width="1.3" fill="none" stroke-linecap="round" stroke-linejoin="round"/></svg>
<div class="t " style="left:1257.90px;top:867.00px;font-size:13px;line-height:13px;color:#3a3f46;-webkit-text-stroke:0.1px #3a3f46;letter-spacing:-0.512px;">1–8 of 8</div>
<svg class="b" style="left:1334px;top:864px" width="16" height="18" viewBox="1334 864 16 18"><path d="M1345.3 869 L1339.2 873.6 L1345.3 878.2" stroke="#bcc3cc" stroke-width="1.5" fill="none" stroke-linecap="round" stroke-linejoin="round"/></svg>
<svg class="b" style="left:1374px;top:864px" width="16" height="18" viewBox="1374 864 16 18"><path d="M1379.2 869 L1385.3 873.6 L1379.2 878.2" stroke="#bcc3cc" stroke-width="1.5" fill="none" stroke-linecap="round" stroke-linejoin="round"/></svg>
</body></html>
